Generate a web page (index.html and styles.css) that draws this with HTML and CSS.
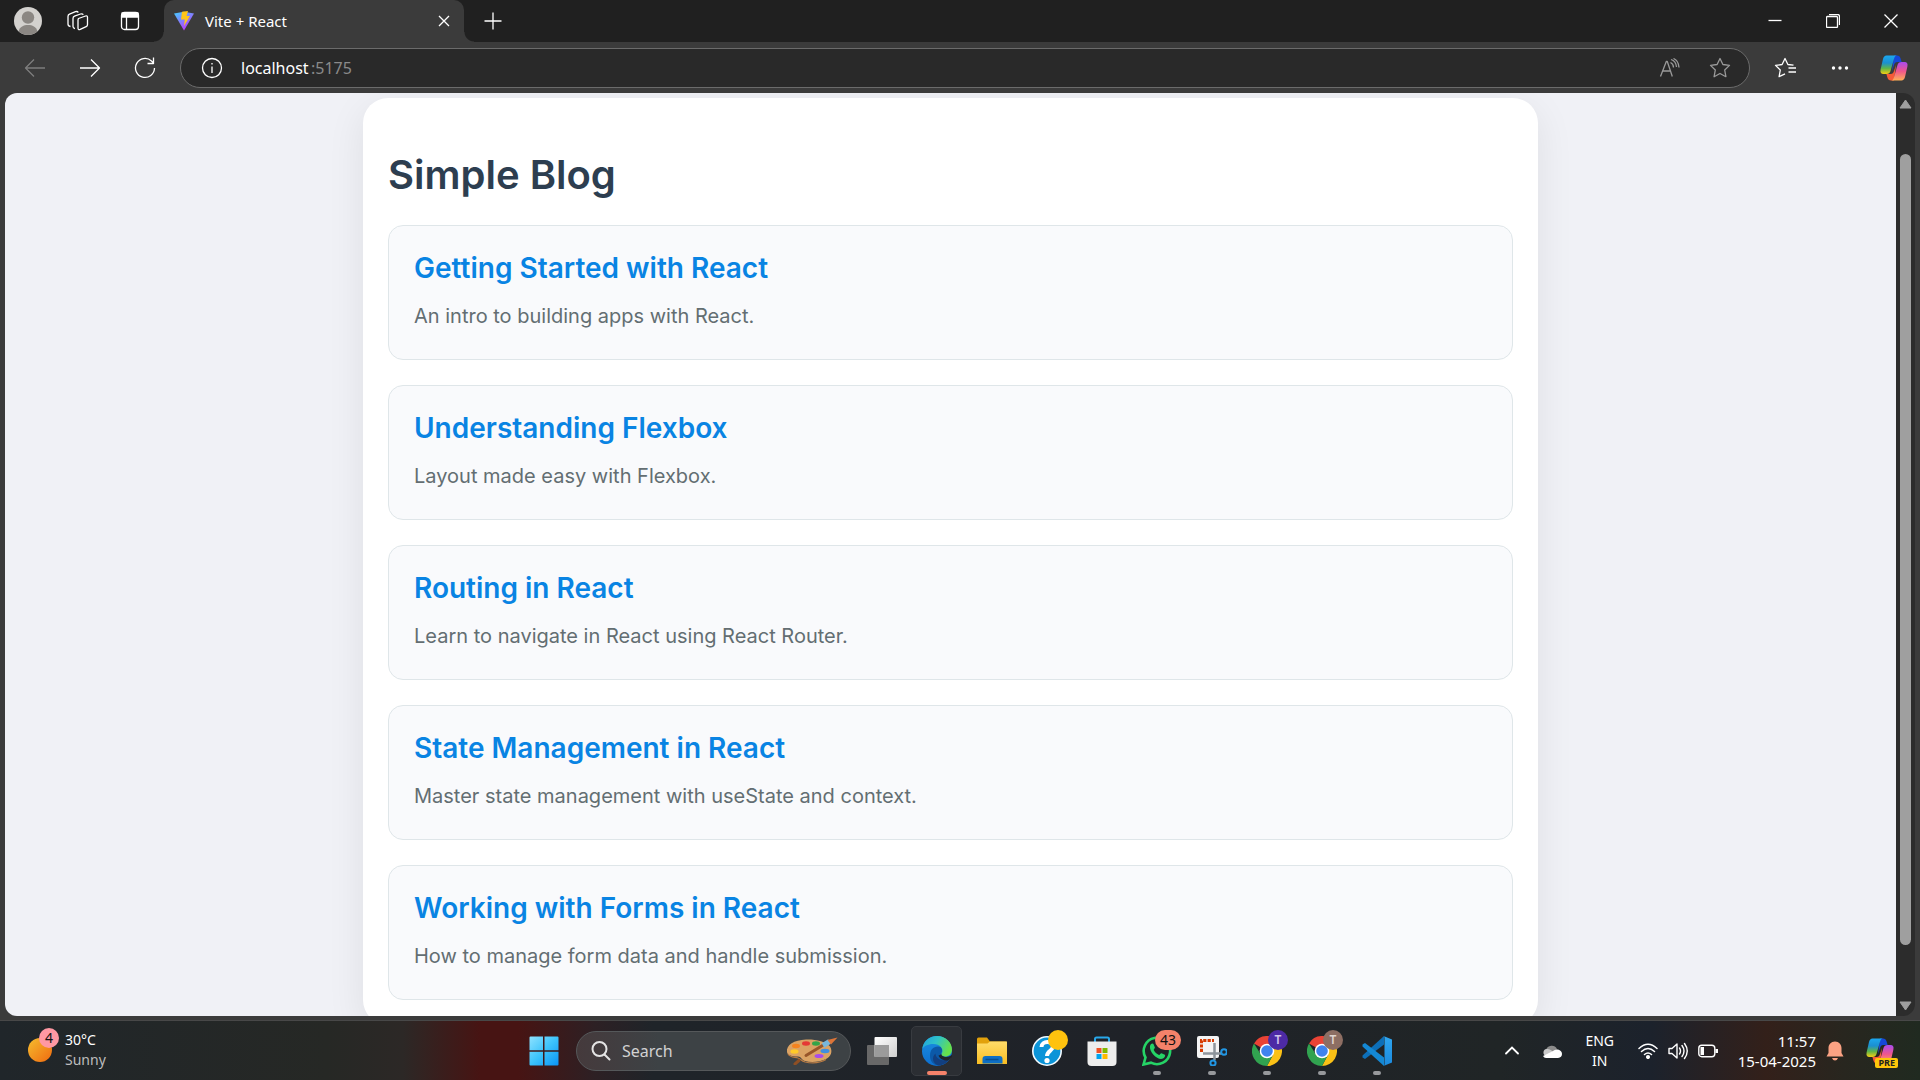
FILE: index.html
```html
<!DOCTYPE html>
<html lang="en">
<head>
<meta charset="utf-8">
<meta name="viewport" content="width=device-width, initial-scale=1">
<title>Vite + React</title>
<link rel="stylesheet" href="styles.css">
</head>
<body>
<svg class="defs" aria-hidden="true">
  <defs>
    <linearGradient id="cp-blue" x1="0" y1="0" x2="0" y2="1"><stop offset="0" stop-color="#1ba8f0"/><stop offset=".4" stop-color="#1b8fd0"/><stop offset=".7" stop-color="#5fb548"/><stop offset="1" stop-color="#f6cf12"/></linearGradient>
    <linearGradient id="cp-pink" x1="0" y1="0" x2="0" y2="1"><stop offset="0" stop-color="#a94bf0"/><stop offset=".5" stop-color="#f0568c"/><stop offset="1" stop-color="#ffb057"/></linearGradient>
    <linearGradient id="win" x1="0" y1="0" x2="1" y2="1"><stop offset="0" stop-color="#8ee2ff"/><stop offset=".5" stop-color="#3cc3fb"/><stop offset="1" stop-color="#0a93f5"/></linearGradient>
    <linearGradient id="edge-top" x1="0" y1="0" x2="1" y2=".4"><stop offset="0" stop-color="#1f9fe0"/><stop offset=".5" stop-color="#2fc3c8"/><stop offset="1" stop-color="#66e04c"/></linearGradient>
    <linearGradient id="edge-mid" x1="0" y1="0" x2="0" y2="1"><stop offset="0" stop-color="#1b8fe0"/><stop offset="1" stop-color="#0d6fd0"/></linearGradient>
    <linearGradient id="folder" x1="0" y1="0" x2="0" y2="1"><stop offset="0" stop-color="#ffdc6a"/><stop offset="1" stop-color="#f9bd22"/></linearGradient>
    <linearGradient id="sun" x1="0" y1="0" x2="1" y2="1"><stop offset="0" stop-color="#f6bd2e"/><stop offset="1" stop-color="#ef6a10"/></linearGradient>
    <linearGradient id="vite-body" x1="0" y1="0" x2=".6" y2="1"><stop offset="0" stop-color="#41d1ff"/><stop offset="1" stop-color="#bd34fe"/></linearGradient>
    <linearGradient id="code" x1="0" y1="0" x2="0" y2="1"><stop offset="0" stop-color="#2fa6f0"/><stop offset="1" stop-color="#1b8ade"/></linearGradient>
    <linearGradient id="view" x1="0" y1="0" x2="1" y2="1"><stop offset="0" stop-color="#fff"/><stop offset="1" stop-color="#cfcfcf"/></linearGradient>
    <symbol id="copilot" viewBox="0 0 28 26">
      <path d="M14 .5h3c2 0 3 1.200 3.600 3L21.600 7h-4.200c-2 0-2.800 1-3.400 3l-2 6z" fill="#1547d8"/>
      <path d="M14 25.500h-3c-2 0-3-1.200-3.600-3L6.400 19h4.200c2 0 2.800-1 3.400-3l2-6z" fill="#f65b38"/>
      <path d="M6.500.5H17c-1.500 0-2.300 1.200-2.900 3L10.500 16c-.6 1.900-1.800 3-4 3H3.400C1 19 0 17.300.6 14.500L3 4C3.600 1.800 4.700.5 6.500.5z" fill="url(#cp-blue)"/>
      <path d="M21.500 25.500H11c1.500 0 2.300-1.200 2.900-3L17.500 10c.6-1.900 1.800-3 4-3h3.100c2.400 0 3.400 1.700 2.800 4.500L25 22c-.6 2.200-1.700 3.500-3.500 3.500z" fill="url(#cp-pink)"/>
    </symbol>
    <symbol id="chrome" viewBox="0 0 30 30">
      <path d="M15 15 2 7.500A15 15 0 0 1 28 7.500z" fill="#ea4335"/>
      <path d="M15 8h13.300A15 15 0 0 1 15 30l6.200-11.500z" fill="#fbc116"/>
      <path d="M2 7.500 8.900 18.500 15 22l6.100-3.500L15 30A15 15 0 0 1 2 7.500z" fill="#31a350"/>
      <circle cx="15" cy="15" r="7.300" fill="#fff"/><circle cx="15" cy="15" r="5.800" fill="#3f83ee"/>
    </symbol>
  </defs>
</svg>

<header class="tabstrip">
  <div class="tabstrip-tools">
    <button class="tool" aria-label="Profile"><svg width="28" height="28" viewBox="0 0 28 28"><circle cx="14" cy="14" r="14" fill="#d3d1ce"/><circle cx="14" cy="10.500" r="6.200" fill="#8b8783"/><path d="M4.500 24.200C6 19.800 9.500 18 14 18s8 1.800 9.500 6.200A14 14 0 0 1 4.500 24.200z" fill="#8b8783"/></svg></button>
    <button class="tool" aria-label="Workspaces"><svg class="line" width="22" height="22" viewBox="0 0 22 22"><path d="M11.500 8.500 18.500 6q2-.6 2 1.300v7.200q0 1.500-1.300 2.100l-6 2.700q-2.200.9-2.200-1.200V10.500q0-1.500.5-2z"/><path d="M8 18.500q-2-.2-2-2V8.500q0-1.700 1.500-2.300l6-2.200q2-.6 2.800.8M3.500 16.500q-2.500-.5-2.500-2.300V6.500q0-1.700 1.500-2.300l6-2.500q2-.6 2.800.8"/></svg></button>
    <button class="tool" aria-label="Tab actions"><svg class="line" width="20" height="20" viewBox="0 0 20 20"><rect x="1.500" y="1.500" width="17" height="17" rx="3"/><path d="M2 2h16v4H2z" fill="#fff"/><path d="M6.500 6v12"/></svg></button>
  </div>
  <div class="tab">
    <svg width="22" height="20" viewBox="0 0 22 20"><path d="M1 2.500 11 .8l10 1.700L11 19.500z" fill="url(#vite-body)"/><path d="M9 .8 15 0l-1.500 5H17l-6 10 .8-6.500H8z" fill="#ffc61a"/></svg>
    <span class="tab-title">Vite + React</span>
    <button class="tab-close" aria-label="Close tab"><svg class="line" width="12" height="12" viewBox="0 0 12 12"><path d="m1 1 10 10M11 1 1 11"/></svg></button>
  </div>
  <button class="tool new-tab" aria-label="New tab"><svg class="line" width="18" height="18" viewBox="0 0 18 18"><path d="M9 .5v17M.5 9h17"/></svg></button>
  <div class="window-controls">
    <button aria-label="Minimize"><svg class="line" width="14" height="14" viewBox="0 0 14 14"><path d="M.5 6.500h13"/></svg></button>
    <button aria-label="Restore"><svg class="line" width="14" height="14" viewBox="0 0 14 14"><rect x=".5" y="2.500" width="11" height="11" rx="1"/><path d="M3 .5h8.500q2 0 2 2V11"/></svg></button>
    <button aria-label="Close"><svg class="line" width="14" height="14" viewBox="0 0 14 14"><path d="m.5.5 13 13M13.500.5l-13 13"/></svg></button>
  </div>
</header>

<nav class="toolbar" aria-label="Browser">
  <button class="nav-btn" aria-label="Back" disabled><svg class="line dim" width="22" height="20" viewBox="0 0 22 20"><path d="M21 10H1.500M10 1.500 1.500 10l8.500 8.500"/></svg></button>
  <button class="nav-btn" aria-label="Forward"><svg class="line" width="22" height="20" viewBox="0 0 22 20"><path d="M1 10h19.500M12 1.500l8.500 8.500-8.500 8.500"/></svg></button>
  <button class="nav-btn" aria-label="Refresh"><svg class="line" width="22" height="22" viewBox="0 0 22 22"><path d="M20.500 11A9.500 9.500 0 1 1 17.500 4L19 5.500M19.500.5v6h-6"/></svg></button>
  <div class="address">
    <svg class="line" width="22" height="22" viewBox="0 0 22 22"><circle cx="11" cy="11" r="9.500"/><path d="M11 9.500V16M11 6v1.600"/></svg>
    <div class="url"><input class="host" type="text" aria-label="Address" value="localhost"><span class="port">:5175</span></div>
    <button class="in-address" aria-label="Read aloud"><svg class="line soft" width="22" height="20" viewBox="0 0 22 20"><path d="m1.500 18.500 5.800-15h1l5 15M3.500 13h8M11.500 4.500q3 1.500 3 5M12 1.500q5 1.500 5.500 7.500M14.500.5q5 2 5.500 9"/></svg></button>
    <button class="in-address" aria-label="Add to favorites"><svg class="line soft" width="22" height="22" viewBox="0 0 22 22"><path d="m11 1.500 2.900 6 6.600.9-4.800 4.600 1.200 6.700L11 16.500l-5.900 3.200L6.300 13 1.500 8.400l6.600-.9z"/></svg></button>
  </div>
  <button class="nav-btn" aria-label="Favorites"><svg class="line" width="22" height="22" viewBox="0 0 22 22"><path d="M19.500 8.200l-5.600-.7-2.900-6-2.900 6-6.600.9 4.800 4.600-1.200 6.700L11 16.800M14.500 11h7.500M14.500 15h7.500"/></svg></button>
  <button class="nav-btn" aria-label="Settings and more"><svg width="18" height="6" viewBox="0 0 18 6" fill="#fff"><circle cx="2.500" cy="3" r="1.700"/><circle cx="9" cy="3" r="1.700"/><circle cx="15.500" cy="3" r="1.700"/></svg></button>
  <button class="nav-btn" aria-label="Copilot"><svg width="28" height="26"><use href="#copilot"/></svg></button>
</nav>

<div class="frame">
  <main class="page">
    <section class="blog">
      <h1>Simple Blog</h1>
      <article class="post"><h2>Getting Started with React</h2><p>An intro to building apps with React.</p></article>
      <article class="post"><h2>Understanding Flexbox</h2><p>Layout made easy with Flexbox.</p></article>
      <article class="post"><h2>Routing in React</h2><p>Learn to navigate in React using React Router.</p></article>
      <article class="post"><h2>State Management in React</h2><p>Master state management with useState and context.</p></article>
      <article class="post"><h2>Working with Forms in React</h2><p>How to manage form data and handle submission.</p></article>
    </section>
  </main>
  <div class="scrollbar">
    <svg width="13" height="10" viewBox="0 0 13 10"><path d="M6.500 1 12 9H1z"/></svg>
    <div class="track"><div class="thumb"></div></div>
    <svg width="13" height="10" viewBox="0 0 13 10"><path d="M6.500 9 12 1H1z"/></svg>
  </div>
</div>

<footer class="taskbar">
  <button class="weather">
    <span class="sun"><svg width="24" height="24"><circle cx="12" cy="12" r="12" fill="url(#sun)"/></svg><span class="badge badge-pink">4</span></span>
    <span class="weather-text"><span>30°C</span><span class="muted">Sunny</span></span>
  </button>
  <div class="apps">
    <button class="app" aria-label="Start"><svg width="30" height="30" viewBox="0 0 30 30" fill="url(#win)"><path d="M1.500.5H14v13.800H.5V1.500q0-1 1-1zM15.500.5H28.500q1 0 1 1v12.800h-14zM.5 15.700H14v13.800H1.500q-1 0-1-1zM15.500 15.700h14v12.800q0 1-1 1h-13z"/></svg></button>
    <label class="search">
      <svg width="20" height="20" viewBox="0 0 20 20" fill="none" stroke="#e4e4e4" stroke-width="2"><circle cx="8.500" cy="8" r="7"/><path d="m13.500 13.500 5 5" stroke-linecap="round"/></svg>
      <input type="text" placeholder="Search" aria-label="Search">
      <svg width="52" height="28" viewBox="0 0 52 28">
        <path d="M1 15C0 8 8 3 20 2.500c10-.3 20 2 24 7 3 5 1 10-4 12.500-6 3-15 4-21 2-4-1.300-3-4-7-4.500C6 19.500 1.500 18.500 1 15z" fill="#dba364"/>
        <path d="M2 17c2 3.500 6 3 10 4 3 1 3 3 7 4 7 1.500 15 1 21-2.500" fill="none" stroke="#b87b43" stroke-width="1.200"/>
        <ellipse cx="10" cy="9" rx="4" ry="2.200" fill="#f5831f"/><ellipse cx="20" cy="6.500" rx="4" ry="2.200" fill="#e53935"/><ellipse cx="30" cy="6.500" rx="4" ry="2.200" fill="#33a548"/><ellipse cx="8.500" cy="14.500" rx="4" ry="2.200" fill="#ffca28"/><ellipse cx="39" cy="14" rx="4.500" ry="2.200" fill="#3f8fe0"/><ellipse cx="33" cy="19" rx="4.500" ry="2" fill="#a94bea"/>
        <path d="m9 27 4-3.500" stroke="#8e4f24" stroke-width="3" stroke-linecap="round"/>
        <path d="M20 18.500 39 7" stroke="#98562a" stroke-width="3" stroke-linecap="round"/><path d="m37 8.500 6.500-4" stroke="#79b7da" stroke-width="5"/><path d="M41.500 3 51.500.5 45 7.500z" fill="#dd7538"/>
      </svg>
    </label>
    <button class="app" aria-label="Task view"><svg width="30" height="28" viewBox="0 0 30 28"><rect x="0" y="8" width="22" height="20" rx="1" fill="#686868"/><rect x="7.500" y="0" width="22.500" height="20" rx="1" fill="url(#view)"/><path d="M7.500 8H22v12H7.500z" fill="#9b9b9b"/></svg></button>
    <button class="app active" aria-label="Microsoft Edge"><svg width="30" height="30" viewBox="0 0 30 30"><circle cx="15" cy="15" r="15" fill="url(#edge-mid)"/><path d="M8 20c0-6 3-9.500 8-9.500 4 0 5 3 3.500 6-.8 2 1.500 4 5 4 2 0 3.300-.5 4-1C27 25.500 21.500 29.500 16 29.500 11 29 8 25 8 20z" fill="#0c59a8"/><path d="M13.500 17.500c0 4.500 5 7.500 9 6.500 3-.6 4-1.500 5-2 0 2-5 7.500-11 7.500-5.500-1.500-7.500-8-3-12z" fill="#123f80"/><path d="M.3 13C1.300 5 7.500 0 15 0c9 0 15 6.500 15 13.500 0 5-4 7.500-7.500 7-4-.5-3.500-2-2.500-3.500 2-4-2-9-8.500-9C5.500 8 1.500 10.500.3 13z" fill="url(#edge-top)"/><path d="M19.500 17c-1 2 1.500 4 5 4 3 0 4-1 5.200-2.500l.3 2.500-4 3.500c-5 0-8.500-2-9.500-5 1.500 0 2.500-1 3-2.500z" fill="#20242a"/></svg><span class="run wide"></span></button>
    <button class="app" aria-label="File Explorer"><svg width="30" height="27" viewBox="0 0 30 27"><path d="M0 2Q0 .5 1.500.5h8.500l3 4H28.500Q30 4.500 30 6v12H0z" fill="#e2a10c"/><path d="M0 6.500h10.500l2.500-2H30V27H0z" fill="url(#folder)"/><path d="M5.500 26.500V22q0-3 3-3h14q3 0 3 3v4.500z" fill="#0e6fc4"/><path d="M8.500 22.500h13" stroke="#064f91" stroke-width="1.500"/></svg></button>
    <button class="app" aria-label="Help"><svg width="30" height="30" viewBox="0 0 30 30"><circle cx="15" cy="15" r="14.200" fill="#0b94d8" stroke="#f5fbff" stroke-width="1.600"/><path d="M9.500 11c0-6.500 11.500-6.500 11.500-.5 0 4.200-6 4.500-6 9.500" fill="none" stroke="#fff" stroke-width="4"/><circle cx="15" cy="24.500" r="2.600" fill="#fff"/></svg><span class="badge badge-yellow"></span></button>
    <button class="app" aria-label="Microsoft Store"><svg width="30" height="30" viewBox="0 0 30 30"><path d="M8 6.500V3q0-1.500 1.500-1.500h11q1.500 0 1.500 1.500v3.500" fill="none" stroke="#28a8ea" stroke-width="2"/><path d="M.5 5.500h29V26q0 4-4 4h-21q-4 0-4-4z" fill="#ededed"/><path d="M9.500 12h5v5h-5z" fill="#f05125"/><path d="M15.500 12h5v5h-5z" fill="#7fba00"/><path d="M9.500 18h5v5h-5z" fill="#00a4ef"/><path d="M15.500 18h5v5h-5z" fill="#ffb900"/></svg></button>
    <button class="app" aria-label="WhatsApp"><svg width="30" height="30" viewBox="0 0 30 30"><path d="M1.500 28.500 3.500 21.500A13.200 13.200 0 1 1 9 26.700z" fill="none" stroke="#25d366" stroke-width="2.600"/><path d="M8 10c1-3 3-3 3.700-1.500l1.200 3c.2.700-1.400 2-1.200 2.600 1 2.200 3 4 5.300 4.800.8.200 1.700-2 2.500-1.700l3.300 1.600c1.200 1-.8 4.200-3.800 4.200C14.500 23 7 16 8 10z" fill="#25d366"/></svg><span class="badge badge-wide">43</span><span class="run"></span></button>
    <button class="app" aria-label="Snipping Tool"><svg width="30" height="30" viewBox="0 0 30 30"><rect x="0" y="0" width="22" height="22" rx="2" fill="#f4f4f4"/><path d="M4.500 16V4.500H17" fill="none" stroke="#d83b01" stroke-width="3" stroke-dasharray="3.200 1.200"/><path d="M17.500 7v17M6 17.500h18" stroke="#8d949b" stroke-width="2.500"/><circle cx="27" cy="16" r="2.800" fill="none" stroke="#2196e3" stroke-width="2"/><circle cx="16" cy="27" r="2.600" fill="none" stroke="#2196e3" stroke-width="2"/></svg><span class="run"></span></button>
    <button class="app" aria-label="Chrome, first profile"><svg width="30" height="30"><use href="#chrome"/></svg><span class="badge badge-purple">T</span><span class="run"></span></button>
    <button class="app" aria-label="Chrome, second profile"><svg width="30" height="30"><use href="#chrome"/></svg><span class="badge badge-brown">T</span><span class="run"></span></button>
    <button class="app" aria-label="Visual Studio Code"><svg width="30" height="30" viewBox="0 0 30 30"><path d="M.5 19.500 22 0v8.500L3 23 .5 21.500z" fill="#0d6fb8"/><path d="M.5 10.500 22 30v-8.500L3 7 .5 8.500z" fill="#1488d4"/><path d="M21.500 0 30 3.500v23L21.500 30q1 0 1-2V2q0-2-1-2z" fill="url(#code)"/></svg><span class="run"></span></button>
  </div>
  <div class="tray">
    <button class="tray-btn" aria-label="Show hidden icons"><svg width="14" height="9" viewBox="0 0 14 9" fill="none" stroke="#fff" stroke-width="1.800" stroke-linecap="round"><path d="m1 7.500 6-6 6 6"/></svg></button>
    <button class="tray-btn" aria-label="OneDrive"><svg width="20" height="14" viewBox="0 0 20 14"><path d="M4 6a6 6 0 0 1 11-1l-4 6H4z" fill="#8b8b8b"/><path d="M4.500 5q3-.5 5 1.500l5 5.500H4a3.600 3.600 0 0 1 .5-7z" fill="#c9c9c9"/><path d="M1 12 11 7q2-2 5-1.500 4 1 4 4.500 0 3.500-4 4H4q-2 0-3-2z" fill="#fff"/></svg></button>
    <button class="lang"><span>ENG</span><span>IN</span></button>
    <button class="status" aria-label="Network, volume, battery">
      <svg width="20" height="16" viewBox="0 0 20 16" fill="none" stroke="#fff" stroke-width="1.500" stroke-linecap="round"><path d="M1 5.500q9-8.500 18 0M3.500 8.500q6.500-6 13 0M6.500 11.500q3.500-3 7 0"/><circle cx="10" cy="14" r="1.300" fill="#fff"/></svg>
      <svg width="20" height="18" viewBox="0 0 20 18" fill="none" stroke="#fff" stroke-width="1.400" stroke-linecap="round" stroke-linejoin="round"><path d="M1 6.500h3l5-4.500v14l-5-4.500H1zM11.500 6q2 3 0 6M14 3.500q4 5.500 0 11M16.500 1.500q5.500 7.500 0 15"/></svg>
      <svg width="20" height="14" viewBox="0 0 20 14"><rect x=".8" y="1.300" width="16" height="11.400" rx="3" fill="none" stroke="#fff" stroke-width="1.400"/><path d="M2.500 3H6v8H2.500zM17.500 5H20v4h-2.500z" fill="#fff"/></svg>
    </button>
    <button class="clock"><span>11:57</span><span>15-04-2025</span></button>
    <button class="bell" aria-label="Notifications"><svg width="18" height="20" viewBox="0 0 18 20" fill="#fba283"><path d="M9 .5c4 0 6.500 3 6.500 6.500v5l2 3.500H.5l2-3.500V7C2.500 3.500 5 .5 9 .5zM6 17h6q-1 2.500-3 2.500T6 17z"/></svg></button>
    <button class="copilot-btn" aria-label="Copilot preview"><svg width="28" height="26"><use href="#copilot"/></svg><span class="pre">PRE</span></button>
  </div>
</footer>
</body>
</html>
```
FILE: styles.css
```css
* { box-sizing: border-box; }

html, body { height: 100%; margin: 0; }

body {
  display: flex;
  flex-direction: column;
  overflow: hidden;
  background: #3b3b3b;
  color: #fff;
  font-family: "Noto Sans", "Open Sans", sans-serif;
  font-size: 14px;
}

button, input {
  padding: 0;
  border: 0;
  background: none;
  color: inherit;
  font: inherit;
}

button {
  display: flex;
  align-items: center;
  justify-content: center;
}

svg { display: block; flex: none; }

.defs { position: absolute; width: 0; height: 0; }

.line { fill: none; stroke: #fff; stroke-width: 1.3; stroke-linejoin: round; }
.dim { stroke: #7d7d7d; }
.soft { stroke: #9a9a9a; }

/* Tab strip */
.tabstrip {
  display: flex;
  height: 42px;
  background: #202020;
}

.tabstrip-tools { display: flex; padding: 0 10px 0 3px; }
.tool { width: 50px; }
.tool:nth-child(3) { width: 54px; }

.tab {
  position: relative;
  display: flex;
  align-items: center;
  width: 300px;
  margin-left: -3px;
  padding: 0 12px 0 9px;
  border-radius: 10px 10px 0 0;
  background: #3b3b3b;
}

.tab::before, .tab::after {
  content: "";
  position: absolute;
  bottom: 0;
  width: 10px;
  height: 10px;
}
.tab::before { right: 100%; background: radial-gradient(circle at 0 0, #202020 9px, #3b3b3b 10px); }
.tab::after { left: 100%; background: radial-gradient(circle at 100% 0, #202020 9px, #3b3b3b 10px); }

.tab-title { flex: 1; margin-left: 10px; font-size: 15px; line-height: 20px; }
.tab-close { width: 16px; height: 16px; }
.new-tab { margin-left: 2px; }

.window-controls { display: flex; margin-left: auto; }
.window-controls button { width: 58px; }

/* Toolbar */
.toolbar {
  display: flex;
  align-items: center;
  height: 51px;
  padding-left: 7px;
}

.nav-btn { width: 55px; height: 40px; }
.nav-btn:last-child { width: 53px; }

.address {
  display: flex;
  flex: 1;
  align-items: center;
  height: 40px;
  margin: 0 7px 0 8px;
  padding: 0 4px 0 20px;
  border: 1px solid #6b6b6b;
  border-radius: 20px;
  background: #292929;
}

.url { display: flex; flex: 1; margin-left: 18px; font-size: 16px; }
.host { width: 70px; outline: 0; }
.port { color: #8a8a8a; }
.in-address { width: 50px; height: 38px; }

/* Web page */
.frame {
  display: flex;
  flex: 1;
  min-height: 0;
  margin: 0 5px 4px;
  overflow: hidden;
  border-radius: 12px;
}

.page {
  flex: 1;
  padding: 5px 25px 0;
  overflow: hidden;
  background: #f0f1f6;
  font-family: Inter, sans-serif;
}

.blog {
  max-width: 1175px;
  margin: 0 auto;
  padding: 51px 25px 25px;
  border-radius: 25px;
  background: #fff;
  box-shadow: 0 10px 38px rgba(0, 0, 0, .08);
}

.blog h1 {
  margin: 0 0 24px;
  color: #2d3e50;
  font-size: 40px;
  font-weight: 600;
  line-height: 52px;
}

.post {
  padding: 24px 25px;
  border: 1px solid #dfe6e9;
  border-radius: 15px;
  background: #f9fafc;
}
.post + .post { margin-top: 25px; }

.post h2 {
  margin: 0 0 12px;
  color: #0984e3;
  font-size: 28px;
  font-weight: 600;
  line-height: 36px;
}

.post p {
  margin: 0;
  color: #636e72;
  font-size: 20px;
  line-height: 37px;
}

.scrollbar {
  display: flex;
  flex-direction: column;
  align-items: center;
  width: 19px;
  padding: 6px 0 5px;
  background: #2c2c2c;
}
.scrollbar path { fill: #9f9f9f; stroke: #9f9f9f; stroke-linejoin: round; }

.track { display: flex; flex: 1; padding: 45px 0 56px; }
.thumb { width: 11px; border-radius: 6px; background: #9f9f9f; }

/* Taskbar */
.taskbar {
  display: grid;
  grid-template-columns: 1fr auto 1fr;
  height: 60px;
  border-top: 1px solid #484848;
  background: linear-gradient(90deg, #20262a 0, #262825 17%, #2c2826 21%, #471413 25%, #471413 27%, #2d2024 31%, #1f2429 34%, #1f2228 60%, #202526 78%, #1c222c 86%, #33201a 92%, #28261f 96%, #202a20);
}

.weather {
  justify-content: flex-start;
  gap: 13px;
  padding: 0 0 2px 28px;
  text-align: left;
}
.sun { position: relative; }
.weather-text, .lang, .clock { display: flex; flex-direction: column; line-height: 20px; }
.muted { color: #bdbdbd; }

.apps { display: flex; align-items: center; }

.app {
  position: relative;
  width: 55px;
  height: 50px;
}
.active::before {
  content: "";
  position: absolute;
  inset: 0 2px;
  border: 1px solid #383b40;
  border-radius: 5px;
  background: #2b2e33;
}
.active svg { position: relative; }

.run {
  position: absolute;
  bottom: 1px;
  left: 50%;
  width: 8px;
  height: 4px;
  margin-left: -4px;
  border-radius: 2px;
  background: #97999c;
}
.wide { width: 20px; margin-left: -10px; background: #f5826a; }

.badge {
  position: absolute;
  top: 4px;
  right: 6px;
  min-width: 20px;
  height: 20px;
  border-radius: 10px;
  color: #111;
  font-size: 14px;
  line-height: 20px;
  text-align: center;
}
.badge-pink { top: -10px; right: -7px; background: #ff98a3; }
.badge-yellow { background: #ffc20e; }
.badge-wide { right: 3px; width: 26px; background: #f5826a; }
.badge-purple, .badge-brown { font-size: 12px; font-weight: 600; }
.badge-purple { background: #4d2aa5; color: #cfc4ea; }
.badge-brown { background: #8d6e63; color: #e0d4cf; }

.search {
  display: flex;
  align-items: center;
  width: 275px;
  height: 40px;
  margin: 0 3px 0 5px;
  padding: 0 12px 0 14px;
  border: 1px solid #55585a;
  border-radius: 20px;
  background: linear-gradient(90deg, #453a3c, #3d4245 30%, #3d4245);
}
.search input { flex: 1; min-width: 0; margin-left: 11px; outline: 0; font-size: 16px; }
.search input::placeholder { color: #d2d2d2; opacity: 1; }

.tray {
  display: flex;
  justify-content: flex-end;
  align-items: center;
  padding-right: 14px;
}
.tray button { height: 50px; }
.tray .tray-btn { width: 40px; }
.tray .lang { width: 56px; }
.tray .status { gap: 10px; width: 100px; }
.tray .clock { align-items: flex-end; padding-left: 10px; font-size: 15px; }
.tray .bell { width: 38px; }

.tray .copilot-btn { position: relative; width: 52px; }
.pre {
  position: absolute;
  right: 8px;
  bottom: 8px;
  padding: 0 3px;
  border-radius: 2px;
  background: #ffc60a;
  color: #222;
  font-size: 9px;
  font-weight: 700;
  line-height: 10px;
}
```
